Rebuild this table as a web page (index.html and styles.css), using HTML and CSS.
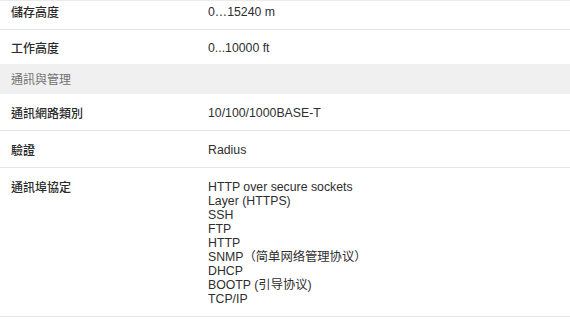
FILE: index.html
```html
<!DOCTYPE html>
<html lang="zh-Hant">
<head>
<meta charset="utf-8">
<link rel="stylesheet" href="styles.css">
</head>
<body>
<div class="specs">
  <div class="row first">
    <div class="label">儲存高度</div>
    <div class="value">0…15240 m</div>
  </div>
  <div class="row second">
    <div class="label">工作高度</div>
    <div class="value">0...10000 ft</div>
  </div>
  <div class="group">通訊與管理</div>
  <div class="row">
    <div class="label">通訊網路類別</div>
    <div class="value">10/100/1000BASE-T</div>
  </div>
  <div class="row">
    <div class="label">驗證</div>
    <div class="value">Radius</div>
  </div>
  <div class="row">
    <div class="label">通訊埠協定</div>
    <div class="value">HTTP over secure sockets<br>Layer (HTTPS)<br>SSH<br>FTP<br>HTTP<br>SNMP（简单网络管理协议）<br>DHCP<br>BOOTP (引导协议)<br>TCP/IP</div>
  </div>
</div>
</body>
</html>
```
FILE: styles.css
```css
html, body {
  margin: 0;
  padding: 0;
  background: #ffffff;
}
body {
  font-family: "Liberation Sans", Arial, "Noto Sans CJK TC", "Noto Sans CJK SC", sans-serif;
  font-size: 12.3px;
  line-height: 14px;
  color: #333333;
}
.specs {
  border-top: 1px solid #ebebeb;
}
.row {
  display: grid;
  grid-template-columns: 208px 1fr;
  padding: 12px 0 10px;
  border-bottom: 1px solid #e6e6e6;
}
.row.first {
  padding-top: 4px;
  padding-bottom: 10px;
}
.row.second {
  padding-top: 11px;
  padding-bottom: 9px;
  border-bottom: 0;
}
.label {
  padding-left: 11px;
  font-family: "Noto Sans CJK TC", sans-serif;
  font-size: 12px;
  font-weight: 500;
  color: #2a2a2a;
}
.value {
  color: #2e2e2e;
}
.group {
  background: #f0f0f0;
  padding: 8px 0 8px 11px;
  font-family: "Noto Sans CJK TC", sans-serif;
  font-size: 12px;
  color: #707070;
}
```
